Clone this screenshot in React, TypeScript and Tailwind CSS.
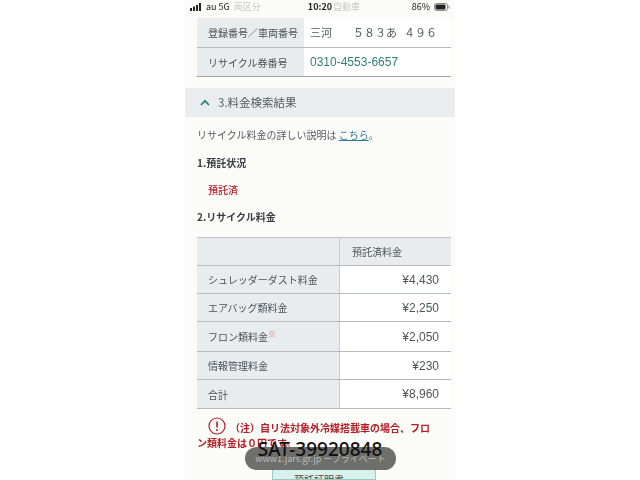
const font = { fontFamily: '"Noto Sans CJK JP", "Liberation Sans", sans-serif' };

function Row({ label, children, h }: { label: React.ReactNode; children: React.ReactNode; h: string }) {
  return (
    <div className={`flex border-b border-[#b4bbc0] ${h}`}>
      <div className="flex w-[143px] items-center border-r border-[#c6ccd0] bg-[#e8ecef] pl-[11px] text-[10px] text-[#4b5257]">{label}</div>
      <div className="flex flex-1 items-center justify-end bg-white pr-[12px] text-[12px] text-[#4f5659]" style={{ fontFamily: '"Liberation Sans", sans-serif' }}>{children}</div>
    </div>
  );
}

export default function App() {
  return (
    <div className="relative flex h-[480px] w-[640px] justify-center overflow-hidden bg-white" style={font}>
      <div className="flex h-[480px] w-[270px] flex-col overflow-hidden bg-[#fbfbf8] blur-[0.4px]">
        <div className="flex h-[13px] shrink-0 items-center justify-between pr-[5px] pl-[5px] text-[9px] text-[#222]">
          <div className="flex w-[74px] items-center gap-[4px] whitespace-nowrap">
            <svg width="12" height="8" viewBox="0 0 12 8"><rect x="0" y="5" width="2" height="3" fill="#222" /><rect x="3" y="3.5" width="2" height="4.5" fill="#222" /><rect x="6" y="2" width="2" height="6" fill="#222" /><rect x="9" y="0" width="2" height="8" fill="#222" /></svg>
            <span>au 5G</span>
            <span className="text-[#c8c8c4]">両区分</span>
          </div>
          <div className="flex w-[60px] items-center gap-[1px] whitespace-nowrap"><span className="font-semibold">10:20</span><span className="text-[#c8c8c4]">自動車</span></div>
          <div className="flex items-center gap-[4px]"><span>86%</span><svg width="16" height="8" viewBox="0 0 16 8"><rect x="0.5" y="0.5" width="13" height="7" rx="2" fill="none" stroke="#888" /><rect x="1.5" y="1.5" width="10" height="5" rx="1" fill="#222" /><rect x="14.5" y="2.5" width="1" height="3" fill="#888" /></svg></div>
        </div>
        <div className="mt-[5px] mr-[4px] ml-[12px] flex flex-col border-b border-[#9ea5a9]">
          <div className="flex h-[30px] border-b border-[#b4bbc0]">
            <div className="flex w-[107px] items-center bg-[#e8ecef] pl-[11px] text-[10px] whitespace-nowrap text-[#4b5257]">登録番号／車両番号</div>
            <div className="flex flex-1 items-center bg-white pl-[6px] text-[11px] whitespace-nowrap text-[#4f5659]"><span className="w-[43px]">三河</span><span>５８３あ</span><span className="ml-[7px]">４９６</span></div>
          </div>
          <div className="flex h-[28px]">
            <div className="flex w-[107px] items-center bg-[#e8ecef] pl-[11px] text-[10px] whitespace-nowrap text-[#4b5257]">リサイクル券番号</div>
            <div className="flex flex-1 items-center bg-white pl-[6px] text-[12px] text-[#2f7f78]" style={{ fontFamily: '"Liberation Sans", sans-serif' }}>0310-4553-6657</div>
          </div>
        </div>
        <div className="mt-[11px] flex h-[29px] shrink-0 items-center gap-[8px] bg-[#e9edef] pl-[15px] text-[11.5px] text-[#555c60]">
          <svg width="10" height="7" viewBox="0 0 10 7"><path d="M1 6 L5 1.8 L9 6" fill="none" stroke="#2d7f78" strokeWidth="1.8" /></svg>
          <span>3.料金検索結果</span>
        </div>
        <div className="flex flex-col pr-[4px] pl-[12px]">
          <p className="mt-[10px] text-[10px] leading-[16px] text-[#565c60]">リサイクル料金の詳しい説明は <span className="text-[#2f7f9a] underline">こちら</span>。</p>
          <p className="mt-[12px] text-[10px] leading-[16px] font-bold text-[#3a3d40]">1.預託状況</p>
          <p className="mt-[11px] pl-[11px] text-[10px] leading-[16px] font-medium text-[#b3202a]">預託済</p>
          <p className="mt-[11px] text-[10px] leading-[16px] font-bold text-[#3a3d40]">2.リサイクル料金</p>
          <div className="mt-[12px] flex flex-col border-t border-[#bcc3c8]">
            <div className="flex h-[28px] border-b border-[#b4bbc0] bg-[#e8ecef]">
              <div className="w-[143px] border-r border-[#c6ccd0]"></div>
              <div className="flex items-center pl-[12px] text-[10px] text-[#4f5659]">預託済料金</div>
            </div>
            <Row label="シュレッダーダスト料金" h="h-[28px]">¥4,430</Row>
            <Row label="エアバッグ類料金" h="h-[28px]">¥2,250</Row>
            <Row label={<span>フロン類料金<sup className="text-[8px] text-[#d8707a]">※</sup></span>} h="h-[30px]">¥2,050</Row>
            <Row label="情報管理料金" h="h-[28px]">¥230</Row>
            <Row label="合計" h="h-[29px]">¥8,960</Row>
          </div>
          <div className="mt-[6px] text-[10px] leading-[18px] font-bold text-[#b3202a]">
            <div className="flex items-center">
              <svg width="18" height="18" viewBox="0 0 18 18" className="ml-[11px]"><circle cx="9" cy="9" r="8" fill="none" stroke="#b3202a" strokeWidth="1.2" /><path d="M9 4.5V10.5" stroke="#b3202a" strokeWidth="1.6" /><circle cx="9" cy="13" r="1" fill="#b3202a" /></svg>
              <span className="mt-[4px] ml-[4px] whitespace-nowrap">（注）自リ法対象外冷媒搭載車の場合、フロ</span>
            </div>
            <div className="mt-[-3px]">ン類料金は０円です。</div>
          </div>
        </div>
      </div>
      <div className="absolute bottom-0 left-[272px] flex h-[15px] w-[104px] items-start justify-center overflow-hidden border border-[#8fcfc6] bg-[#d8f1ec] pt-[7px] pr-[10px] text-[10px] leading-[14px] text-[#444]">預託証明書</div>
      <div className="absolute top-[447px] left-[245px] flex h-[23px] w-[151px] items-center justify-center rounded-full bg-[#6e6e6a] text-[9px] text-[#bbb]">www1.jars.gr.jp ープライベート</div>
      <div className="absolute top-[437px] left-0 w-[640px] text-center text-[19px] leading-[24px] font-medium text-[#111]" style={{ fontFamily: '"Noto Sans", sans-serif' }}>SAT-39920848</div>
    </div>
  );
}
